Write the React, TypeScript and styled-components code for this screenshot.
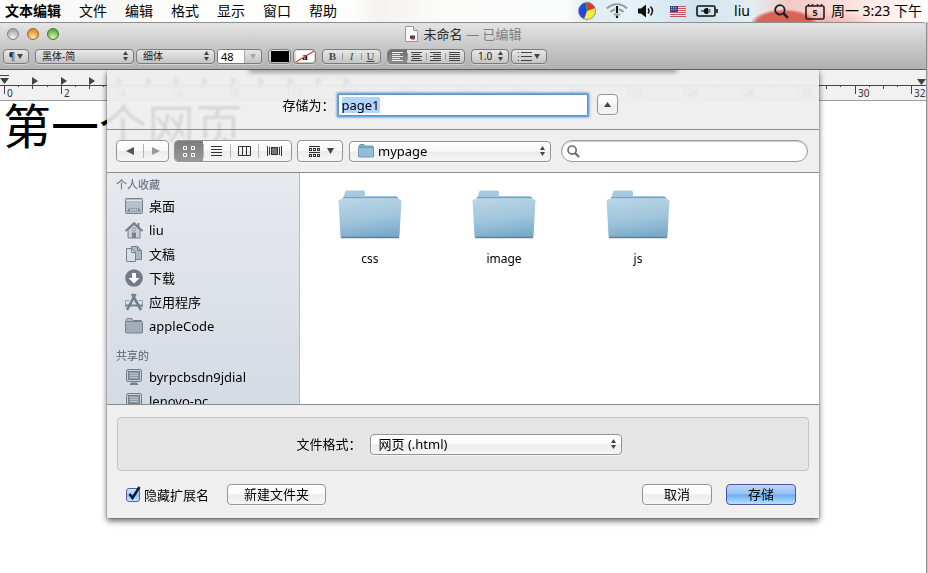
import React, { useState } from "react";
import styled, { createGlobalStyle, css } from "styled-components";

const Global = createGlobalStyle`
  *, *::before, *::after { box-sizing: border-box; }
  html, body, #root { height: 100%; }
  body { margin: 0; overflow: hidden; background: #fff; }
  body, button, input, select {
    font-family: "Noto Sans", "Noto Sans CJK SC", sans-serif;
    font-size: 13px;
    color: #000;
  }
`;

/* ---------- shell ---------- */
const Desktop = styled.div`
  height: 100%;
  min-height: 540px;
  display: flex;
  flex-direction: column;
`;

const MenuBar = styled.header`
  height: 22px;
  flex: none;
  display: flex;
  align-items: center;
  justify-content: space-between;
  padding: 0 6px 0 5px;
  font-size: 14px;
  background:
    radial-gradient(ellipse 34px 15px at 784px 24px, #d9625a 80%, transparent 100%),
    radial-gradient(ellipse 60px 16px at 820px 26px, #eeb0a8 20%, transparent 100%),
    linear-gradient(90deg, #fdfdfd 0, #f7f7f4 12%, #fff 20%, #fdfdfc 38%, #f3f2ee 41%, #fcfcfb 48%, #fbfcfc 61%, #deedf4 63%, #e6f3f9 68%, #cfe2ee 75%, #e3eef4 81%, #f3c9c4 85%, #fbe3df 92%, #fff 100%);
`;

const MenuList = styled.nav`
  display: flex;
  gap: 18px;
`;

const MenuItem = styled.button<{ $strong?: boolean }>`
  border: 0;
  padding: 0;
  background: none;
  font-size: 14px;
  line-height: 22px;
  white-space: nowrap;
  font-weight: ${(p) => (p.$strong ? 700 : 400)};
`;

const StatusList = styled.div`
  display: flex;
  align-items: center;
  line-height: 22px;
  white-space: nowrap;
`;

const Status = styled.span<{ $before?: number }>`
  display: flex;
  align-items: center;
  gap: 6px;
  font-size: 14px;
  margin-left: ${(p) => p.$before ?? 0}px;
`;

const Window = styled.main`
  flex: 1;
  min-height: 0;
  margin-right: 2px;
  display: flex;
  flex-direction: column;
  box-shadow: 1px 0 0 #8f8f8f, 3px 0 0 #c4c4c4;
`;

const Chrome = styled.div`
  flex: none;
  height: 48px;
  border-top: 1px solid #8d8d8d;
  border-bottom: 1px solid #5e5e5e;
  border-radius: 0 4px 0 0;
  background: linear-gradient(#e4e4e4, #c9c9c9 50%, #b0b0b0);
`;

const TitleRow = styled.div`
  height: 21px;
  display: grid;
  grid-template-columns: 1fr auto 1fr;
  align-items: center;
  padding: 0 7px;
`;

const Lights = styled.div`
  display: flex;
  gap: 8px;
`;

const Light = styled.button<{ $top: string; $bottom: string; $edge: string }>`
  width: 12px;
  height: 12px;
  padding: 0;
  border-radius: 50%;
  border: 1px solid ${(p) => p.$edge};
  background: radial-gradient(circle at 50% 85%, ${(p) => p.$bottom}, ${(p) => p.$top} 75%);
`;

const Title = styled.h1`
  margin: 0;
  display: flex;
  align-items: center;
  gap: 6px;
  font-size: 13px;
  line-height: 20px;
  font-weight: 400;
  color: #2d2d2d;
`;

const Edited = styled.span`
  color: #808080;
`;

const FormatRow = styled.div`
  height: 24px;
  display: flex;
  align-items: center;
  padding: 0 3px;
  gap: 2px;
`;

const toolSkin = css`
  height: 15px;
  border: 1px solid #7b7b7b;
  border-radius: 4px;
  background: linear-gradient(#e8e8e8, #c4c4c4);
  box-shadow: 0 1px 0 #d2d2d2;
`;

const ToolButton = styled.button<{ $w: number }>`
  ${toolSkin}
  width: ${(p) => p.$w}px;
  padding: 0;
  display: flex;
  align-items: center;
  justify-content: center;
  gap: 2px;
  font-size: 10px;
  line-height: 13px;
  color: #333;
`;

const Stack = styled.span<{ $w?: number }>`
  display: inline-grid;
  align-items: center;
  ${(p) => (p.$w ? `width: ${p.$w}px;` : "")}
  & > * { grid-area: 1 / 1; }
  & > svg { pointer-events: none; }
`;

const ArrowEnd = styled.svg`
  justify-self: end;
  margin-right: 6px;
`;

const ToolSelect = styled.select`
  ${toolSkin}
  appearance: none;
  width: 100%;
  padding: 0 14px 0 6px;
  font-size: 10px;
  line-height: 13px;
  color: #222;
`;

const SizeBox = styled.span`
  ${toolSkin}
  width: 45px;
  display: flex;
  overflow: hidden;
  border-radius: 3px;
`;

const SizeInput = styled.input`
  width: 26px;
  border: 0;
  padding: 0 3px;
  font-size: 11px;
  line-height: 13px;
  background: #fff;
`;

const SizeDrop = styled.button`
  flex: 1;
  border: 0;
  border-left: 1px solid #aaa;
  padding: 0;
  display: grid;
  place-items: center;
  background: none;
`;

const ToolSpace = styled.span`
  flex: none;
  width: 2px;
`;

const ToolGroup = styled.div`
  ${toolSkin}
  display: flex;
  overflow: hidden;
`;

const ToolSeg = styled.button<{ $on?: boolean }>`
  width: 19px;
  border: 0;
  padding: 0;
  display: grid;
  place-items: center;
  font-family: "Liberation Serif", serif;
  font-size: 11px;
  line-height: 13px;
  color: #444;
  background: ${(p) => (p.$on ? "linear-gradient(#6e6e6e, #8d8d8d)" : "none")};
  & + & {
    background: linear-gradient(#999, #999) 0 50% / 1px 7px no-repeat;
  }
`;

const Page = styled.section`
  flex: 1;
  min-height: 0;
  position: relative;
  background: #fff;
`;

const Ruler = styled.div`
  height: 31px;
  overflow: hidden;
  background: #f1f1f1;
  border-bottom: 1px solid #9c9c9c;
`;

const DocText = styled.p`
  margin: 0;
  padding: 0 3px;
  font-size: 48px;
  line-height: 50px;
  white-space: nowrap;
`;

/* ---------- save sheet ---------- */
const Sheet = styled.form`
  position: absolute;
  top: 0;
  left: 107px;
  right: 107px;
  min-width: 660px;
  background: rgba(237, 237, 237, 0.91);
  backdrop-filter: blur(1px);
  box-shadow: 0 3px 6px rgba(0, 0, 0, 0.6), 0 0 1px rgba(0, 0, 0, 0.6);
  clip-path: inset(0 -12px -14px -12px);
`;

const SlotShadow = styled.div`
  position: absolute;
  top: -4px;
  left: 20%;
  right: 20%;
  height: 4px;
  box-shadow: 0 2px 5px rgba(0, 0, 0, 0.45);
`;

const NameRow = styled.div`
  height: 59px;
  display: flex;
  align-items: center;
  justify-content: center;
  padding: 10px 0 0;
  margin-left: -26px;
`;

const Label = styled.label`
  line-height: 20px;
  white-space: nowrap;
`;

const NameInput = styled.input`
  width: 250px;
  height: 22px;
  margin: 0 9px 0 3px;
  padding: 0 3px;
  border: 1px solid #5f95cc;
  border-radius: 1px;
  outline: 0;
  background: linear-gradient(90deg, #b2d5fd, #b2d5fd) 3px 2px / 38px 16px no-repeat #fff;
  box-shadow: 0 0 0 1px rgba(109, 163, 216, 0.9), 0 0 2px 2px rgba(109, 163, 216, 0.7);
`;

const aqua = css`
  border: 1px solid #949494;
  border-radius: 4px;
  background: linear-gradient(#fff, #f9f9f9 48%, #ececec 52%, #f6f6f6);
  box-shadow: 0 1px 0 rgba(255, 255, 255, 0.6);
`;

const ExpandButton = styled.button`
  ${aqua}
  width: 21px;
  height: 21px;
  padding: 0;
  display: grid;
  place-items: center;
`;

const Browse = styled.div`
  height: 43px;
  border-top: 1px solid #8c8c8c;
  display: flex;
  align-items: center;
  padding: 0 11px 0 9px;
`;

const SegGroup = styled.div`
  ${aqua}
  height: 22px;
  display: flex;
  overflow: hidden;
  margin-right: 5px;
`;

const Seg = styled.button<{ $w: number; $on?: boolean }>`
  width: ${(p) => p.$w}px;
  border: 0;
  padding: 0;
  display: grid;
  place-items: center;
  background: ${(p) => (p.$on ? "linear-gradient(#7c7c7c, #989898)" : "none")};
  & + & {
    background: linear-gradient(#b5b5b5, #b5b5b5) 0 50% / 1px 14px no-repeat;
  }
`;

const ArrangeButton = styled.button`
  ${aqua}
  width: 46px;
  height: 22px;
  padding: 0 0 0 2px;
  margin-right: 6px;
  display: flex;
  align-items: center;
  justify-content: center;
  gap: 7px;
`;

const Popup = styled.select<{ $indent: number }>`
  ${aqua}
  appearance: none;
  width: 100%;
  height: 21px;
  padding: 0 20px 1px ${(p) => p.$indent}px;
  line-height: 18px;
`;

const FolderMark = styled.svg`
  margin-left: 9px;
`;

const SearchWrap = styled.label`
  flex: 1;
  height: 22px;
  margin-left: 10px;
  padding: 0 5px;
  display: flex;
  align-items: center;
  gap: 4px;
  background: #fff;
  border: 1px solid #9a9a9a;
  border-radius: 11px;
  box-shadow: inset 0 1px 1px #ccc;
`;

const SearchInput = styled.input`
  flex: 1;
  min-width: 0;
  border: 0;
  padding: 0;
  outline: 0;
  background: none;
`;

const Panes = styled.div`
  height: 233px;
  display: flex;
  border-top: 1px solid #8c8c8c;
  border-bottom: 1px solid #8c8c8c;
  background: #fff;
`;

const Sidebar = styled.aside`
  width: 193px;
  flex: none;
  overflow: hidden;
  border-right: 1px solid #b9b9b9;
  background: linear-gradient(#e6e9ee, #d5dbe3);
`;

const SideTitle = styled.h2`
  margin: 0;
  padding: 3px 9px 0;
  font-size: 11px;
  line-height: 18px;
  font-weight: 500;
  color: #6c7885;
`;

const SideList = styled.ul`
  margin: 0 0 6px;
  padding: 0;
  list-style: none;
`;

const SideItem = styled.li`
  height: 24px;
  display: flex;
  align-items: center;
  gap: 6px;
  padding-left: 18px;
  line-height: 18px;
  white-space: nowrap;
`;

const Files = styled.ul`
  flex: 1;
  margin: 0;
  padding: 16px 3px 0;
  list-style: none;
  display: grid;
  grid-template-columns: repeat(auto-fill, 134px);
  align-content: start;
`;

const FileItem = styled.li`
  display: flex;
  flex-direction: column;
  align-items: center;
  gap: 5px;
  font-size: 12px;
  line-height: 18px;
`;

const FormatBox = styled.div`
  height: 54px;
  margin: 12px 10px 0;
  padding-right: 8px;
  display: flex;
  align-items: center;
  justify-content: center;
  gap: 8px;
  border: 1px solid #c4c4c4;
  border-radius: 4px;
  background: #e5e5e5;
`;

const Actions = styled.div`
  height: 47px;
  display: flex;
  align-items: center;
  gap: 14px;
  padding: 0 23px 0 19px;
`;

const CheckLabel = styled.label`
  display: flex;
  align-items: center;
  gap: 1px;
  margin-right: 4px;
  line-height: 18px;
`;

const Check = styled.input`
  appearance: none;
  width: 14px;
  height: 14px;
  margin: 0;
  border: 1px solid #53669a;
  border-radius: 3px;
  background: linear-gradient(#d7e8fb, #8fc3f3 55%, #c5ecff);
`;

const Push = styled.button<{ $w: number; $primary?: boolean }>`
  ${aqua}
  width: ${(p) => p.$w}px;
  height: 21px;
  padding: 0 0 1px;
  line-height: 18px;
  ${(p) =>
    p.$primary &&
    css`
      border-color: #4c55a2;
      background: linear-gradient(#bcd6f5, #94c1f3 48%, #6cacee 52%, #b5e4fe);
    `}
`;

const Grow = styled.span`
  flex: 1;
`;

/* ---------- drawings ---------- */
const Down = ({ c = "#444", s = 6 }: { c?: string; s?: number }) => (
  <svg width={s} height={s - 1} viewBox="0 0 6 5"><path d="M0 0H6L3 5Z" fill={c} /></svg>
);

const UpDown = () => (
  <ArrowEnd width="5" height="10" viewBox="0 0 5 10">
    <path d="M0 4 2.5 0 5 4ZM0 6 2.5 10 5 6Z" fill="#444" />
  </ArrowEnd>
);

const PX = 28.35;
const RulerScale = () => {
  const ticks: React.ReactNode[] = [];
  for (let i = 0; i <= 64; i++) {
    const x = Math.round(4 + (i * PX) / 2);
    const len = i % 4 === 0 ? 9 : i % 2 === 0 ? 4 : 2;
    ticks.push(<rect key={i} x={x} y={15} width={1} height={len} fill="#444" />);
    if (i % 4 === 0)
      ticks.push(
        <text key={`t${i}`} x={x + 3} y={27} fontSize={10} fill="#333">{i / 2}</text>
      );
    if (i % 2 === 0 && i > 0 && i <= 24)
      ticks.push(<path key={`p${i}`} d={`M${x} 7l6 4l-6 4Z`} fill="#444" />);
  }
  return (
    <svg width="100%" height="30" fontFamily="Noto Sans, sans-serif">
      <rect y="15" width="100%" height="1" fill="#444" />
      {ticks}
      <path d="M0 5h9v1H0ZM0 8h9l-4.500 6Z" fill="#444" />
      <path d="M917 9h9l-4.500 6Z" fill="#444" />
    </svg>
  );
};

const Pie = () => (
  <svg width="18" height="18" viewBox="0 0 18 18">
    <circle cx="9" cy="9" r="8.500" fill="#2145e0" />
    <path d="M9 9 8 .5A8.500 8.500 0 0 1 17 6Z" fill="#e8332a" />
    <path d="M9 9 17 6A8.500 8.500 0 0 1 6 17Z" fill="#f7ec3b" />
    <path d="M9 9 8 .5" stroke="#3fae4a" />
    <circle cx="9" cy="9" r="8.500" fill="none" stroke="#777" strokeWidth=".6" />
  </svg>
);

const Wifi = () => (
  <svg width="22" height="16" viewBox="0 0 22 16" fill="none" stroke="#999" strokeWidth="2">
    <path d="M1 5.500a14 14 0 0 1 20 0M4.500 9a9 9 0 0 1 13 0M8 12a4.500 4.500 0 0 1 6 0" />
    <path d="M11 2.500v8M11 12.500v2.500" stroke="#eaf4f9" strokeWidth="4" />
    <path d="M11 3v7M11 12.500v2.500" stroke="#111" strokeWidth="2.200" />
  </svg>
);

const Speaker = () => (
  <svg width="16" height="14" viewBox="0 0 16 14">
    <path d="M0 4.500h3L8 0.500v13L3 9.500H0Z" fill="#111" />
    <path d="M10 4.500q2 2.500 0 5M12.500 2.500q4 4.500 0 9" fill="none" stroke="#111" strokeWidth="1.500" />
  </svg>
);

const Flag = () => (
  <svg width="16" height="11" viewBox="0 0 16 11">
    <rect width="16" height="11" fill="#f5e4e6" />
    {[0, 2, 4, 6, 8, 10].map((y) => <rect key={y} y={y} width="16" height="1" fill="#c2555e" />)}
    <rect width="8" height="6" fill="#3b4a86" />
    <path d="M1 1.500h6M1 3.500h6" stroke="#a9b3d8" strokeDasharray="1 1" />
  </svg>
);

const Battery = () => (
  <svg width="22" height="12" viewBox="0 0 22 12">
    <rect x="1" y="1" width="18" height="10" rx="1.500" fill="none" stroke="#111" strokeWidth="1.600" />
    <path d="M21 4v4" stroke="#111" strokeWidth="1.600" />
    <path d="M5 5.500h2.500Q8 3 10.500 3H12v1.500h2.500v1H12v1h2.500v1H12V9h-1.500Q8 9 7.500 6.500H5Z" fill="#111" />
  </svg>
);

const Glass = ({ s, c, w }: { s: number; c: string; w: number }) => (
  <svg width={s} height={s} viewBox="0 0 14 14" fill="none" stroke={c}>
    <circle cx="5.500" cy="5.500" r="4.400" strokeWidth={w} />
    <path d="M8.800 8.800 13 13" strokeWidth={w + 0.6} />
  </svg>
);

const Calendar = () => (
  <svg width="20" height="17" viewBox="0 0 20 17">
    <rect x="1" y="3" width="18" height="13" rx="1.500" fill="none" stroke="#2a1a1a" strokeWidth="1.600" />
    <path d="M3.500 1v2M7.500 1v2M12.500 1v2M16.500 1v2" stroke="#2a1a1a" strokeWidth="1.500" />
    <text x="10" y="13" fontSize="9" fontWeight="700" textAnchor="middle" fill="#2a1a1a">5</text>
  </svg>
);

const DocIcon = () => (
  <svg width="13" height="16" viewBox="0 0 13 16">
    <path d="M.5.5h8l4 4v11H.5Z" fill="#f7f7f7" stroke="#999" />
    <path d="M8.500.5v4h4" fill="#ddd" stroke="#999" />
    <path d="M5 9.500h5v3H8l-1 1-2-1Z" fill="#444" />
    <circle cx="8.500" cy="12.500" r="1.300" fill="#b33" />
  </svg>
);

const Lines = ({ kind, c = "#444" }: { kind: "l" | "c" | "r" | "j"; c?: string }) => {
  const w = kind === "j" ? [11, 11, 11, 11, 11] : [11, 8, 11, 8, 11];
  return (
    <svg width="11" height="9" viewBox="0 0 11 9">
      {w.map((n, i) => (
        <rect key={i} y={i * 2} height="1" width={n} fill={c}
          x={kind === "r" ? 11 - n : kind === "c" ? Math.floor((11 - n) / 2) : 0} />
      ))}
    </svg>
  );
};

const Bullets = () => (
  <svg width="14" height="9" viewBox="0 0 14 9" fill="#444">
    {[0, 4, 8].map((y) => (
      <g key={y}><rect y={y} width="1" height="1" /><rect x="3" y={y} width="11" height="1" /></g>
    ))}
  </svg>
);

const Swatch = () => (
  <svg width="18" height="11" viewBox="0 0 18 11"><rect width="18" height="11" fill="#000" /></svg>
);

const NoColor = () => (
  <svg width="18" height="11" viewBox="0 0 18 11">
    <rect width="18" height="11" fill="#fff" />
    <text x="9" y="9" fontSize="11" fontWeight="700" textAnchor="middle" fontFamily="Liberation Serif, serif">a</text>
    <path d="M0 11 18 0" stroke="#e0392b" strokeWidth="1.200" />
  </svg>
);

const GridIcon = () => (
  <svg width="12" height="11" viewBox="0 0 12 11" fill="none" stroke="#fff">
    <path d="M.5.5h3v3h-3ZM8.500.5h3v3h-3ZM.5 7.500h3v3h-3ZM8.500 7.500h3v3h-3Z" />
  </svg>
);

const ListIcon = () => (
  <svg width="11" height="10" viewBox="0 0 11 10" fill="#333">
    {[0, 3, 6, 9].map((y) => <rect key={y} y={y} width="11" height="1" />)}
  </svg>
);

const ColumnsIcon = () => (
  <svg width="13" height="10" viewBox="0 0 13 10" fill="none" stroke="#333">
    <path d="M.5.5h12v9H.5ZM4.500.5v9M8.500.5v9" />
  </svg>
);

const FlowIcon = () => (
  <svg width="15" height="10" viewBox="0 0 15 10">
    <path d="M.5 0v10M2.500 1v8M12.500 1v8M14.500 0v10" stroke="#333" />
    <rect x="4.500" y="1.500" width="6" height="7" fill="#777" stroke="#333" />
  </svg>
);

const ArrangeIcon = () => (
  <svg width="11" height="11" viewBox="0 0 11 11" fill="#333">
    {[0, 6].map((y) => <rect key={y} y={y} width="11" height="1" />)}
    {[2, 8].map((y) => [0, 4, 8].map((x) => (
      <path key={`${x}-${y}`} fillRule="evenodd" d={`M${x} ${y}h3v3h-3ZM${x + 1} ${y + 1}v1h1v-1Z`} />
    )))}
  </svg>
);

const BigFolder = () => (
  <svg width="64" height="56" viewBox="0 0 64 56">
    <defs>
      <linearGradient id="front" x1=".3" y1="0" x2=".5" y2="1">
        <stop offset="0" stopColor="#bad4e5" />
        <stop offset=".55" stopColor="#9fc4dc" />
        <stop offset="1" stopColor="#78aaca" />
      </linearGradient>
    </defs>
    <path d="M5 14V9l1-2 1-4q.5-1.500 2-1.500h16q2 0 2 2V7h31l2 2v5Z" fill="#a6c9df" />
    <path d="M5 8.500h55" stroke="#6ea2c2" />
    <path d="M.5 11Q2.500 10.500 3.500 9.500h57q1 1 3 1.500L61.500 47q0 1.500-1.500 1.500H4q-1.500 0-1.500-1.500Z" fill="url(#front)" />
    <path d="M3 48.500h58" stroke="#63808f" strokeWidth="1.500" />
  </svg>
);

const SmallFolder = () => (
  <FolderMark width="16" height="14" viewBox="0 0 16 14">
    <path d="M1 3V1.500L2 .5h4L7 2h8v2Z" fill="#85b0cc" stroke="#6d9dba" />
    <path d="M.5 3.500h15V13h-15Z" fill="#92bdd8" stroke="#6d9dba" />
  </FolderMark>
);

const g = "#75808d";
const sideIcons: Record<string, React.ReactNode> = {
  desktop: (
    <>
      <rect x=".5" y="1.500" width="17" height="15" rx="1" fill="#b6bfca" stroke={g} />
      <path d="M1 3.500h16" stroke="#e3e7ec" />
      <path d="M2 14.500l2-3h10l2 3Z" fill={g} />
      <path d="M5 13h8" stroke="#eef1f5" strokeWidth="1.500" strokeDasharray="1.500 .7" />
    </>
  ),
  home: (
    <>
      <path d="M3 9v8h12V9L9 3.500Z" fill="#c7cfd8" stroke={g} />
      <path d="M.5 10 9 2l8.500 8M13.500 2v4" fill="none" stroke={g} strokeWidth="1.800" />
      <rect x="7" y="11.500" width="4" height="5.500" fill={g} />
      <circle cx="9" cy="8.500" r="1.500" fill="#fff" stroke={g} />
    </>
  ),
  docs: (
    <>
      <path d="M6.500 1.500h6l4 4v9h-10Z" fill="#aeb8c4" stroke={g} />
      <path d="M12.500 1.500v4h4" fill="none" stroke={g} />
      <path d="M1.500 3.500h5l4 4v9h-9Z" fill="#d9dee5" stroke={g} />
      <path d="M6.500 3.500v4h4" fill="none" stroke={g} />
    </>
  ),
  down: (
    <>
      <circle cx="9" cy="9" r="8.800" fill="#6f7b88" />
      <path d="M7 4h4v5h3.500L9 14.500 3.500 9H7Z" fill="#fff" />
    </>
  ),
  apps: (
    <>
      <path d="M.5 14.500v-7h4M17.500 14.500v-7h-4" fill="none" stroke="#98a3af" />
      <path d="M.5 12.500h17" stroke={g} strokeWidth="2" />
      <path d="M10.500 1 2 17M7 1l9 16" stroke={g} strokeWidth="2.600" fill="none" />
    </>
  ),
  folder: (
    <>
      <path d="M1 4V2.500L2 1.500h5L8 3.500h8.500V6H1Z" fill="#b4bdc8" stroke={g} />
      <rect x=".5" y="4.500" width="17" height="11.500" rx="1" fill="#a3adb9" stroke={g} />
    </>
  ),
  screen: (
    <>
      <rect x="1.500" y="1.500" width="15" height="12" rx="1.500" fill="#c7ced7" stroke={g} />
      <rect x="3.500" y="3.500" width="11" height="8" fill="#8d99a6" stroke={g} />
      <path d="M5 5.500h8M5 7.500h8M5 9.500h8" stroke="#b9c2cc" />
      <path d="M6 14.500h6l1.500 2.500h-9Z" fill={g} />
    </>
  ),
};

const SideRow = ({ icon, text }: { icon: string; text: string }) => (
  <SideItem>
    <svg width="18" height="18" viewBox="0 0 18 18">{sideIcons[icon]}</svg>
    {text}
  </SideItem>
);

const CheckMark = () => (
  <svg width="17" height="18" viewBox="0 0 17 18">
    <path d="M3.500 8 6.500 12 13.500 1" fill="none" stroke="#0c1733" strokeWidth="2.600" />
  </svg>
);

export default function App() {
  const [name, setName] = useState("page1");
  const [hideExt, setHideExt] = useState(true);

  return (
    <Desktop>
      <Global />
      <MenuBar>
        <MenuList>
          <MenuItem $strong>文本编辑</MenuItem>
          {["文件", "编辑", "格式", "显示", "窗口", "帮助"].map((m) => (
            <MenuItem key={m}>{m}</MenuItem>
          ))}
        </MenuList>
        <StatusList>
          <Status><Pie /></Status>
          <Status $before={10}><Wifi /></Status>
          <Status $before={10}><Speaker /></Status>
          <Status $before={16}><Flag /></Status>
          <Status $before={10}><Battery /></Status>
          <Status $before={16}>liu</Status>
          <Status $before={24}><Glass s={15} c="#1c1c1c" w={1.7} /></Status>
          <Status $before={16}><Calendar />周一 3:23 下午</Status>
        </StatusList>
      </MenuBar>

      <Window>
        <Chrome>
          <TitleRow>
            <Lights>
              <Light aria-label="关闭" $top="#a9a9a9" $bottom="#f4f4f4" $edge="#808080" />
              <Light aria-label="最小化" $top="#e58d2c" $bottom="#ffe9a8" $edge="#9c6425" />
              <Light aria-label="缩放" $top="#5fae43" $bottom="#d7f7ae" $edge="#47772f" />
            </Lights>
            <Title>
              <DocIcon />
              <span>未命名 <Edited>— 已编辑</Edited></span>
            </Title>
          </TitleRow>
          <FormatRow>
            <ToolButton $w={26} aria-label="段落样式">¶<Down s={6} /></ToolButton>
            <ToolSpace />
            <Stack $w={99}>
              <ToolSelect aria-label="字体"><option>黑体-简</option></ToolSelect>
              <UpDown />
            </Stack>
            <Stack $w={79}>
              <ToolSelect aria-label="字样"><option>细体</option></ToolSelect>
              <UpDown />
            </Stack>
            <SizeBox>
              <SizeInput aria-label="字号" defaultValue="48" />
              <SizeDrop aria-label="选择字号"><Down c="#aaa" s={6} /></SizeDrop>
            </SizeBox>
            <ToolSpace />
            <ToolButton $w={23} aria-label="文本颜色"><Swatch /></ToolButton>
            <ToolButton $w={23} aria-label="背景颜色"><NoColor /></ToolButton>
            <ToolSpace />
            <ToolGroup>
              <ToolSeg aria-label="粗体"><b>B</b></ToolSeg>
              <ToolSeg aria-label="斜体"><i>I</i></ToolSeg>
              <ToolSeg aria-label="下划线"><u>U</u></ToolSeg>
            </ToolGroup>
            <ToolSpace />
            <ToolGroup>
              <ToolSeg $on aria-label="左对齐"><Lines kind="l" c="#eee" /></ToolSeg>
              <ToolSeg aria-label="居中"><Lines kind="c" /></ToolSeg>
              <ToolSeg aria-label="右对齐"><Lines kind="r" /></ToolSeg>
              <ToolSeg aria-label="两端对齐"><Lines kind="j" /></ToolSeg>
            </ToolGroup>
            <ToolSpace />
            <Stack $w={38}>
              <ToolSelect aria-label="行距"><option>1.0</option></ToolSelect>
              <UpDown />
            </Stack>
            <ToolButton $w={36} aria-label="列表"><Bullets /><Down s={6} /></ToolButton>
          </FormatRow>
        </Chrome>

        <Page>
          <Ruler><RulerScale /></Ruler>
          <DocText>第一个网页</DocText>

          <Sheet onSubmit={(e) => e.preventDefault()}>
            <SlotShadow />
            <NameRow>
              <Label htmlFor="name">存储为：</Label>
              <NameInput id="name" value={name} onChange={(e) => setName(e.target.value)} />
              <ExpandButton type="button" aria-label="收起">
                <svg width="7" height="5" viewBox="0 0 7 5"><path d="M0 5H7L3.500 0Z" fill="#444" /></svg>
              </ExpandButton>
            </NameRow>

            <Browse>
              <SegGroup>
                <Seg type="button" $w={26} aria-label="后退">
                  <svg width="8" height="8" viewBox="0 0 9 9"><path d="M9 0V9L0 4.500Z" fill="#555" /></svg>
                </Seg>
                <Seg type="button" $w={25} aria-label="前进">
                  <svg width="8" height="8" viewBox="0 0 9 9"><path d="M0 0V9L9 4.500Z" fill="#999" /></svg>
                </Seg>
              </SegGroup>
              <SegGroup>
                <Seg type="button" $w={28} $on aria-label="图标"><GridIcon /></Seg>
                <Seg type="button" $w={27} aria-label="列表"><ListIcon /></Seg>
                <Seg type="button" $w={28} aria-label="分栏"><ColumnsIcon /></Seg>
                <Seg type="button" $w={33} aria-label="封面流"><FlowIcon /></Seg>
              </SegGroup>
              <ArrangeButton type="button" aria-label="排列"><ArrangeIcon /><Down s={7} /></ArrangeButton>
              <Stack $w={202}>
                <Popup $indent={28} aria-label="位置"><option>mypage</option></Popup>
                <SmallFolder />
                <UpDown />
              </Stack>
              <SearchWrap>
                <Glass s={13} c="#6a6a6a" w={1.8} />
                <SearchInput type="search" aria-label="搜索" />
              </SearchWrap>
            </Browse>

            <Panes>
              <Sidebar>
                <SideTitle>个人收藏</SideTitle>
                <SideList>
                  <SideRow icon="desktop" text="桌面" />
                  <SideRow icon="home" text="liu" />
                  <SideRow icon="docs" text="文稿" />
                  <SideRow icon="down" text="下载" />
                  <SideRow icon="apps" text="应用程序" />
                  <SideRow icon="folder" text="appleCode" />
                </SideList>
                <SideTitle>共享的</SideTitle>
                <SideList>
                  <SideRow icon="screen" text="byrpcbsdn9jdial" />
                  <SideRow icon="screen" text="lenovo-pc" />
                </SideList>
              </Sidebar>
              <Files>
                {["css", "image", "js"].map((f) => (
                  <FileItem key={f}><BigFolder />{f}</FileItem>
                ))}
              </Files>
            </Panes>

            <FormatBox>
              <Label htmlFor="format">文件格式：</Label>
              <Stack $w={252}>
                <Popup id="format" $indent={8}><option>网页 (.html)</option></Popup>
                <UpDown />
              </Stack>
            </FormatBox>
            <Actions>
              <CheckLabel>
                <Stack>
                  <Check type="checkbox" checked={hideExt} onChange={(e) => setHideExt(e.target.checked)} />
                  {hideExt && <CheckMark />}
                </Stack>
                隐藏扩展名
              </CheckLabel>
              <Push type="button" $w={99}>新建文件夹</Push>
              <Grow />
              <Push type="button" $w={70}>取消</Push>
              <Push type="submit" $w={70} $primary>存储</Push>
            </Actions>
          </Sheet>
        </Page>
      </Window>
    </Desktop>
  );
}
